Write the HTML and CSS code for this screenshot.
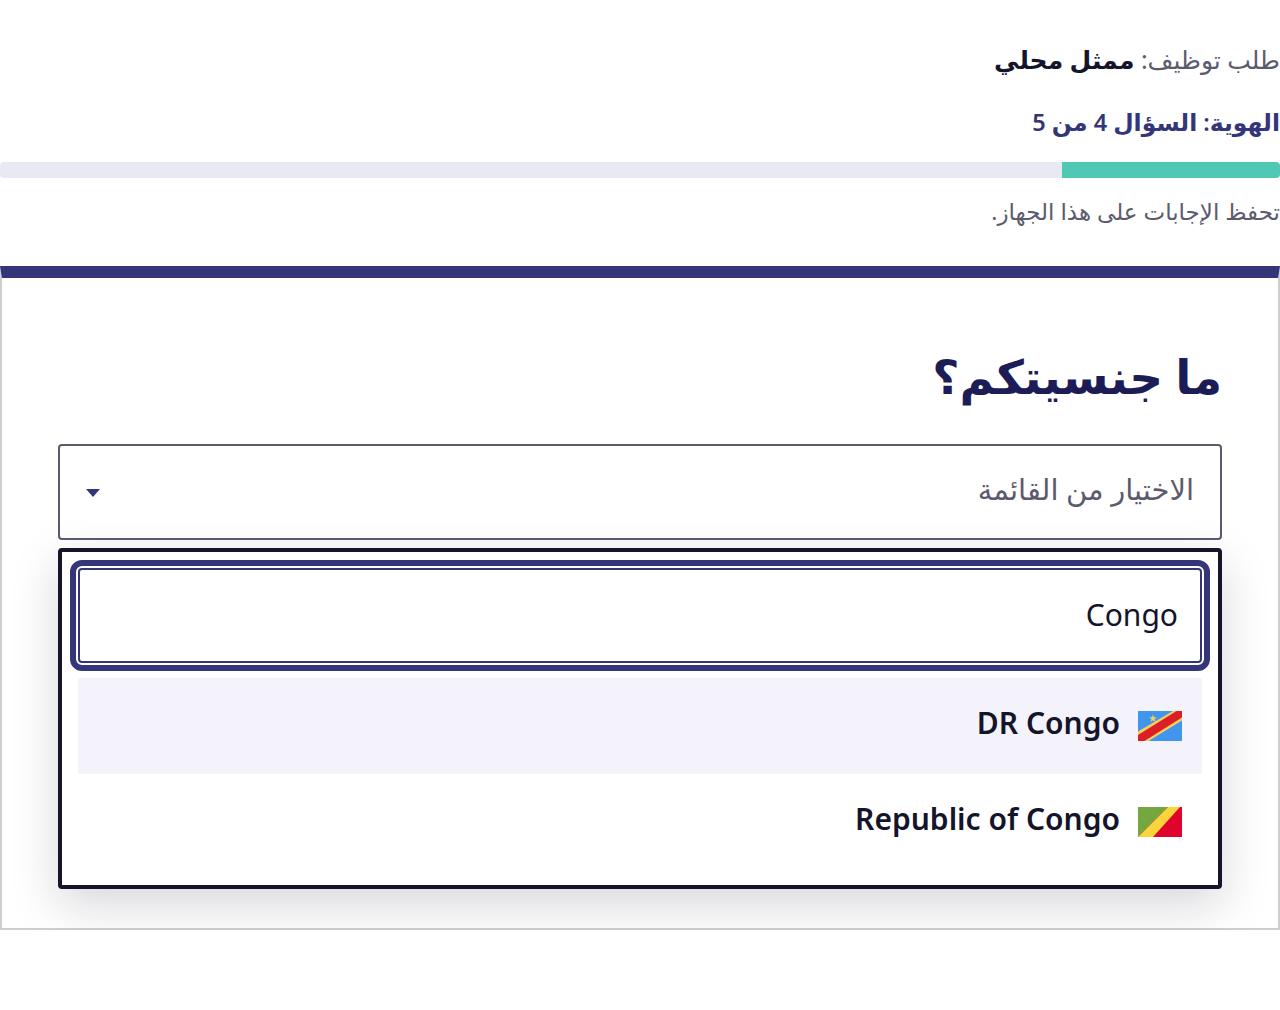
FILE: index.html
```html
<!DOCTYPE html>
<html lang="ar" dir="rtl">
<head>
  <meta charset="utf-8">
  <title>طلب توظيف</title>
  <link rel="stylesheet" href="styles.css">
</head>
<body>
  <header class="intro">
    <p class="job-title">طلب توظيف: <strong>ممثل محلي</strong></p>
    <p class="step">الهوية: السؤال 4 من 5</p>
    <div class="progress"><div class="progress-fill"></div></div>
    <p class="saved">تحفظ الإجابات على هذا الجهاز.</p>
  </header>

  <section class="card">
    <h1>ما جنسيتكم؟</h1>
    <div class="select">
      <span class="select-value">الاختيار من القائمة</span>
      <span class="caret"></span>
    </div>
    <div class="dropdown">
      <div class="search-ring">
        <input class="search" type="text" value="Congo" dir="rtl">
      </div>
      <ul class="options">
        <li class="option active">
          <svg class="flag" viewBox="0 0 44 30" width="44" height="30">
            <rect width="44" height="30" fill="#3f96ec"/>
            <polygon points="0,20.500 35,0 44,0 44,9.500 10.500,30 0,30" fill="#f7cf5c"/>
            <polygon points="0,24 38.500,0 44,0 44,6.500 6.500,30 0,30" fill="#dc1f26"/>
            <polygon points="15,3.500 16,6.200 19,6.200 16.600,8 17.500,11 15,9.200 12.500,11 13.400,8 11,6.200 14,6.200" fill="#f7cf5c"/>
          </svg>
          <span class="option-name" dir="ltr">DR Congo</span>
        </li>
        <li class="option">
          <svg class="flag" viewBox="0 0 44 30" width="44" height="30">
            <rect width="44" height="30" fill="#e0042d"/>
            <polygon points="0,0 30,0 0,30" fill="#74a83f"/>
            <polygon points="30,0 42,0 15,30 0,30" fill="#fbd33d"/>
          </svg>
          <span class="option-name" dir="ltr">Republic of Congo</span>
        </li>
      </ul>
    </div>
  </section>
</body>
</html>
```

FILE: styles.css
```css
* {
  box-sizing: border-box;
}
body {
  margin: 0;
  background: #fff;
  color: #14142b;
  font-family: "Noto Sans", "DejaVu Sans", sans-serif;
}
.intro {
  padding-top: 38px;
}
.intro p {
  margin: 0;
}
.job-title {
  font-size: 25px;
  line-height: 42px;
  color: #5c5b6e;
}
.job-title strong {
  color: #14142b;
  font-weight: 700;
}
.intro .step {
  margin-top: 22px;
  font-size: 23.500px;
  line-height: 40px;
  font-weight: 600;
  color: #35357a;
}
.progress {
  margin-top: 20px;
  height: 16px;
  border-radius: 4px;
  background: #e9e9f4;
  overflow: hidden;
}
.progress-fill {
  width: 17%;
  height: 100%;
  background: #4fc9b4;
}
.intro .saved {
  margin-top: 13px;
  font-size: 23px;
  line-height: 40px;
  color: #5c5b6e;
}
.card {
  margin-top: 35px;
  height: 664px;
  padding: 56px 56px 0;
  border: 2px solid #cfcfcf;
  border-top: 12px solid #35357a;
}
h1 {
  margin: 0;
  height: 110px;
  font-size: 47px;
  line-height: 84px;
  font-weight: 700;
  color: #1c1c56;
}
.select {
  height: 96px;
  display: flex;
  align-items: center;
  justify-content: space-between;
  padding: 0 26px;
  border: 2px solid #5c5b6e;
  border-radius: 4px;
}
.select-value {
  padding-bottom: 8px;
  font-size: 29px;
  color: #5c5b6e;
}
.caret {
  width: 0;
  height: 0;
  margin-top: 2px;
  border-left: 7.500px solid transparent;
  border-right: 7.500px solid transparent;
  border-top: 8px solid #35357a;
}
.dropdown {
  position: relative;
  margin-top: 8px;
  height: 341px;
  padding: 8px;
  border: 4px solid #14142b;
  border-radius: 4px;
  background: #fff;
  box-shadow: 0 16px 48px rgba(20, 20, 43, 0.17);
}
.search-ring {
  height: 111px;
  padding: 2px;
  border: 6px solid #35357a;
  border-radius: 12px;
}
.search {
  display: block;
  width: 100%;
  height: 100%;
  padding: 0 22px 2px;
  border: 2px solid #35357a;
  border-radius: 4px;
  background: #fff;
  font-family: "Noto Sans", "DejaVu Sans", sans-serif;
  font-size: 30px;
  color: #14142b;
  outline: none;
}
.options {
  list-style: none;
  margin: 7px 8px 0;
  padding: 0;
}
.option {
  display: flex;
  align-items: center;
  gap: 18px;
  height: 96px;
  padding: 0 20px;
  font-size: 30px;
  font-weight: 600;
  color: #14142b;
}
.option.active {
  background: #f4f3fb;
  border-radius: 2px;
}
.option-name {
  padding-bottom: 8px;
}
.flag {
  flex: none;
}
```
